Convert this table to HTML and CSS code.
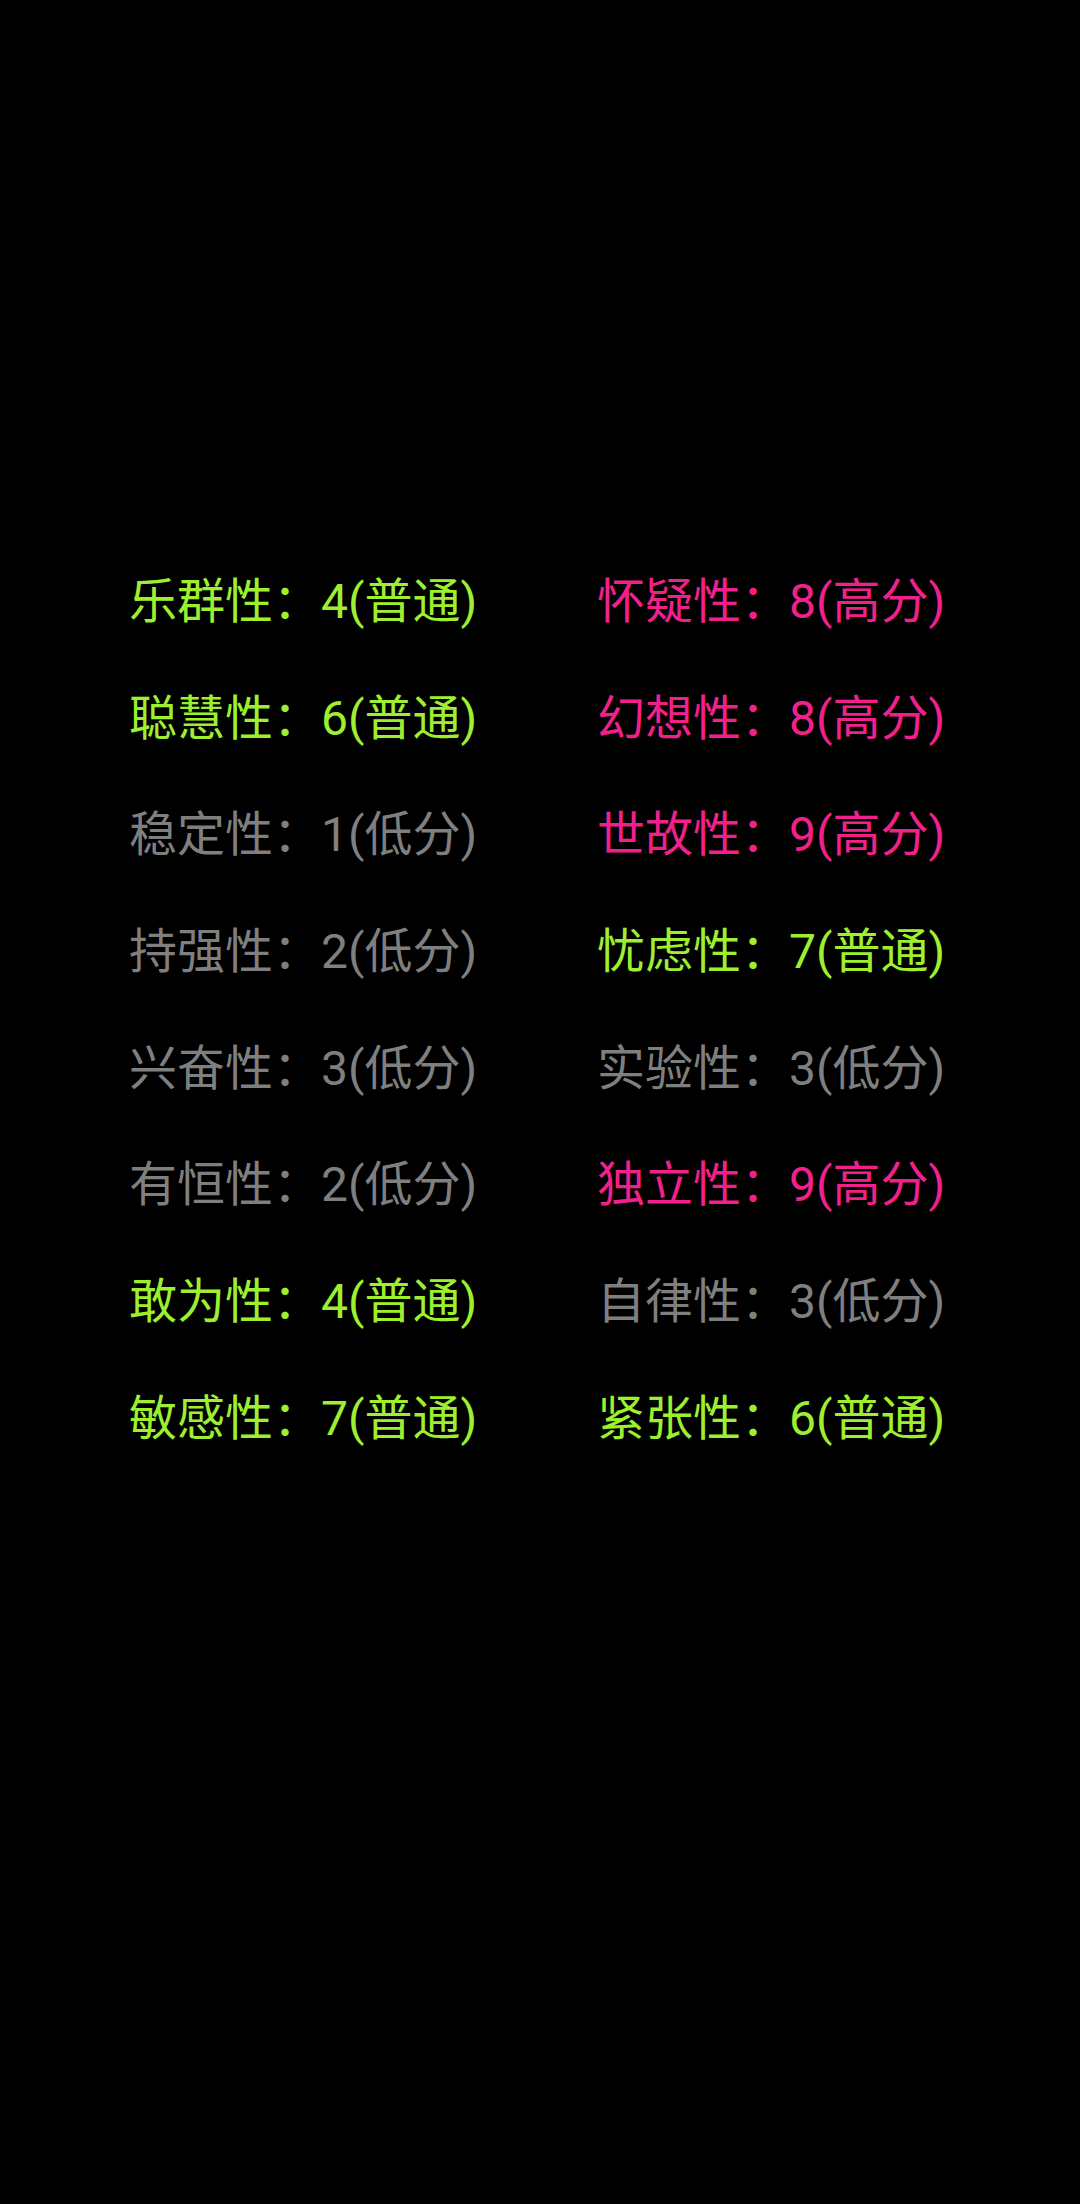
FILE: index.html
```html
<!DOCTYPE html>
<html lang="zh-CN">
<head>
<meta charset="utf-8">
<link rel="stylesheet" href="styles.css">
</head>
<body>
<main class="page">
  <section class="traits">
    <div class="trait mid">乐群性：4(普通)</div>
    <div class="trait high">怀疑性：8(高分)</div>
    <div class="trait mid">聪慧性：6(普通)</div>
    <div class="trait high">幻想性：8(高分)</div>
    <div class="trait low">稳定性：1(低分)</div>
    <div class="trait high">世故性：9(高分)</div>
    <div class="trait low">持强性：2(低分)</div>
    <div class="trait mid">忧虑性：7(普通)</div>
    <div class="trait low">兴奋性：3(低分)</div>
    <div class="trait low">实验性：3(低分)</div>
    <div class="trait low">有恒性：2(低分)</div>
    <div class="trait high">独立性：9(高分)</div>
    <div class="trait mid">敢为性：4(普通)</div>
    <div class="trait low">自律性：3(低分)</div>
    <div class="trait mid">敏感性：7(普通)</div>
    <div class="trait mid">紧张性：6(普通)</div>
  </section>
</main>
</body>
</html>
```

FILE: styles.css
```css
html, body {
  margin: 0;
  padding: 0;
  background: #000;
}
.page {
  width: 1080px;
  height: 2204px;
  background: #000;
  box-sizing: border-box;
  padding-top: 572px;
  padding-left: 129px;
}
.traits {
  display: grid;
  grid-template-columns: 468px 468px;
  row-gap: 56.7px;
}
.trait {
  font-family: "Roboto", "Noto Sans CJK SC", sans-serif;
  font-size: 48px;
  line-height: 60px;
  height: 60px;
  white-space: nowrap;
}
.mid { color: #9def2f; }
.high { color: #f2208c; }
.low { color: #7f7f7f; }
```
